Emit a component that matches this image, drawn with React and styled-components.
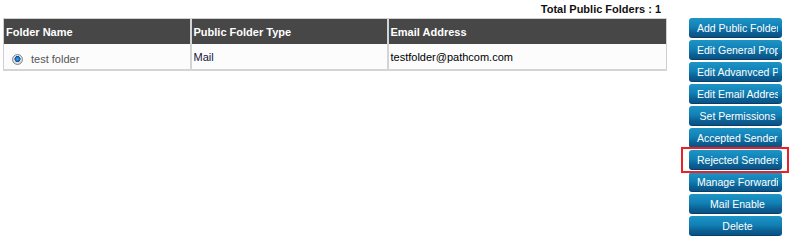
import React from "react";
import styled, { createGlobalStyle } from "styled-components";

const Global = createGlobalStyle`
  html, body { margin: 0; padding: 0; background: #fff; }
  body { font-family: "Liberation Sans", Arial, sans-serif; font-size: 11px; }
`;

const Page = styled.div`
  display: flex;
  align-items: flex-start;
  padding: 0 0 0 3px;
  width: 791px;
  box-sizing: border-box;
`;

const Main = styled.div`
  width: 664px;
  display: flex;
  flex-direction: column;
`;

const Total = styled.div`
  font-weight: bold;
  color: #111;
  text-align: right;
  padding-right: 6px;
  height: 17px;
  line-height: 17px;
  padding-top: 1px;
`;

const Table = styled.table`
  width: 664px;
  border-collapse: collapse;
  table-layout: fixed;
  border: 1px solid #cfcfcf;
`;

const Col = styled.col`
  width: ${(p) => (p.$w ? `${p.$w}px` : "auto")};
`;

const Th = styled.th`
  background: #474747;
  color: #fff;
  font-weight: bold;
  font-size: 11px;
  text-align: left;
  height: 25px;
  padding: 0 2px;
  border-left: 2px solid #d4d4d4;
  &:first-child { border-left: none; }
`;

const Td = styled.td`
  height: 26px;
  background: #fcfcfc;
  padding: 0 2px;
  color: ${(p) => p.$color || "#000"};
  border-left: 2px solid #d4d4d4;
  border-bottom: 2px solid #d4d4d4;
  &:first-child { border-left: none; }
  box-sizing: border-box;
`;

const Cell = styled.div`
  display: flex;
  align-items: center;
  gap: 8px;
  padding-left: 6px;
  padding-top: 5px;
  color: #555;
`;

const Radio = styled.span`
  display: inline-block;
  width: 11px;
  height: 11px;
  border-radius: 50%;
  box-sizing: border-box;
  border: 1px solid #8a8a8a;
  background: radial-gradient(circle at 50% 45%, #4aa8f0 0, #0b4fa0 2.8px, #e8e8e8 3.3px, #cfcfcf 5px);
`;

const Side = styled.div`
  margin-left: 22px;
  margin-top: 18px;
  display: flex;
  flex-direction: column;
  gap: 2px;
  position: relative;
`;

const Btn = styled.button`
  width: 93px;
  height: 20px;
  padding: 0 0 0 8px;
  border: none;
  border-right: 4px solid transparent;
  border-radius: 3px;
  background: linear-gradient(#1d95c6 0%, #1280b4 45%, #0b5f93 75%, #0a4f80 100%);
  background-origin: border-box;
  box-shadow: inset 0 -1px 0 #073f6a;
  color: #fff;
  font-family: "Liberation Sans", Arial, sans-serif;
  font-size: 10.5px;
  white-space: nowrap;
  overflow: hidden;
  text-align: center;
  line-height: 20px;
  display: block;
`;

const Highlight = styled.div`
  position: absolute;
  left: -8px;
  top: 129px;
  width: 108px;
  height: 26px;
  border: 2px solid #e8212b;
  box-sizing: border-box;
  pointer-events: none;
`;

const buttons = [
  "Add Public Folder",
  "Edit General Properties",
  "Edit Advanvced Properties",
  "Edit Email Addresses",
  "Set Permissions",
  "Accepted Senders",
  "Rejected Senders",
  "Manage Forwarding",
  "Mail Enable",
  "Delete",
];

export default function App() {
  return (
    <>
      <Global />
      <Page>
        <Main>
          <Total>Total Public Folders : 1</Total>
          <Table>
            <colgroup>
              <Col $w={187} />
              <Col $w={197} />
              <Col />
            </colgroup>
            <thead>
              <tr>
                <Th>Folder Name</Th>
                <Th>Public Folder Type</Th>
                <Th>Email Address</Th>
              </tr>
            </thead>
            <tbody>
              <tr>
                <Td>
                  <Cell>
                    <Radio />
                    test folder
                  </Cell>
                </Td>
                <Td $color="#14143c">Mail</Td>
                <Td>testfolder@pathcom.com</Td>
              </tr>
            </tbody>
          </Table>
        </Main>
        <Side>
          {buttons.map((b) => (
            <Btn key={b}>{b}</Btn>
          ))}
          <Highlight />
        </Side>
      </Page>
    </>
  );
}
